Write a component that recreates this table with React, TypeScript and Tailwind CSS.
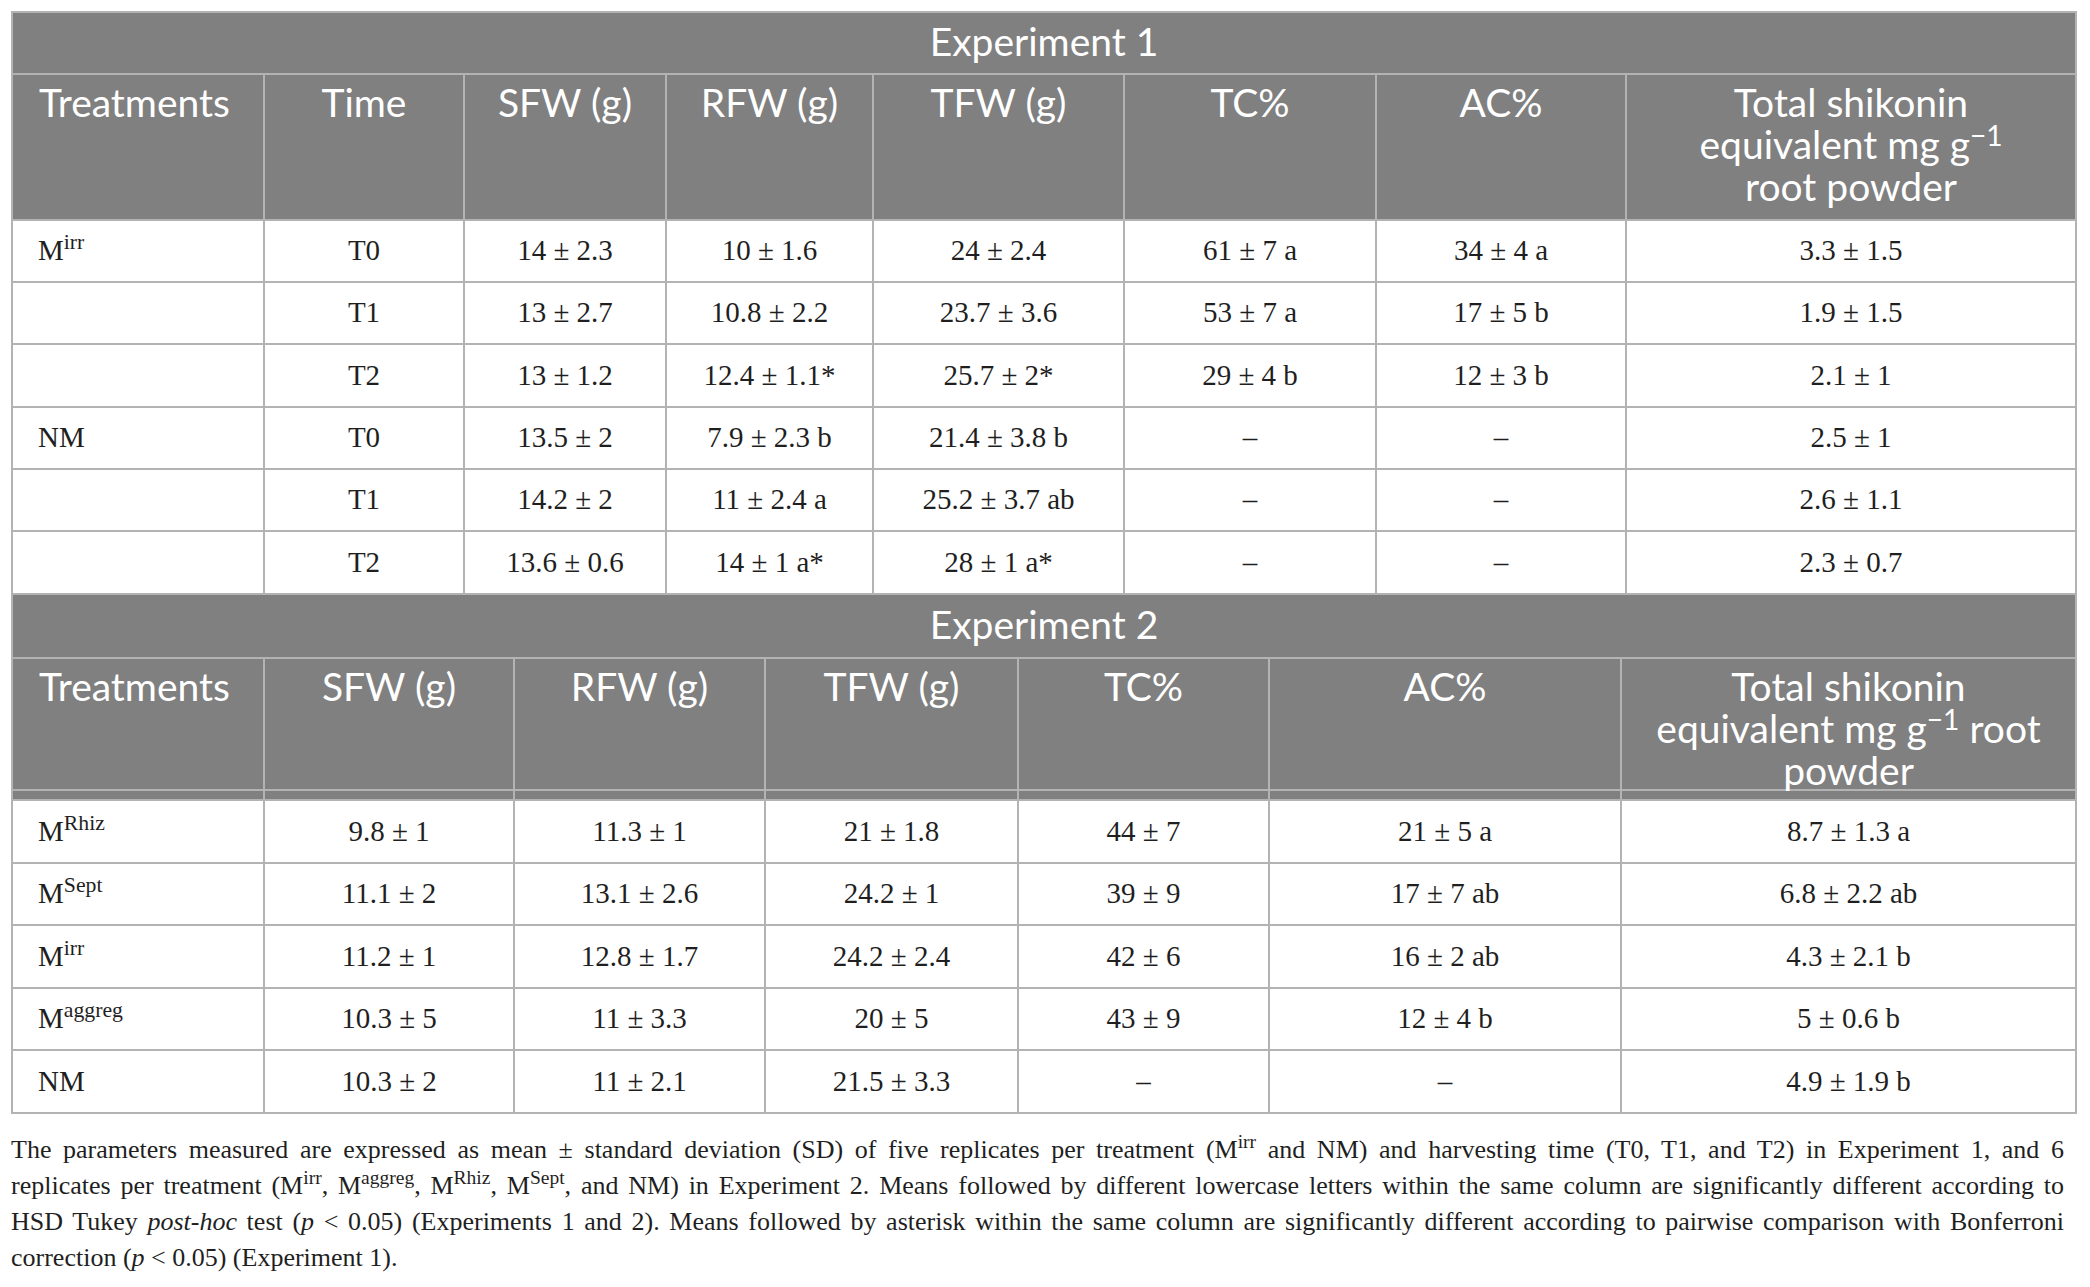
import React from "react";

const B = "border-[#b3b3b3]";
const HEAD = "font-['Lato','Noto_Sans',sans-serif] text-white text-[39px] leading-[42px]";
const BODY = "font-['Liberation_Serif','Times_New_Roman',serif] text-[#1f1f1f] text-[29px]";

type Cell = React.ReactNode;

const exp1Rows: { h: string; cells: Cell[] }[] = [
  { h: "h-[62px]", cells: [<>M<sup>irr</sup></>, "T0", "14 ± 2.3", "10 ± 1.6", "24 ± 2.4", "61 ± 7 a", "34 ± 4 a", "3.3 ± 1.5"] },
  { h: "h-[62px]", cells: ["", "T1", "13 ± 2.7", "10.8 ± 2.2", "23.7 ± 3.6", "53 ± 7 a", "17 ± 5 b", "1.9 ± 1.5"] },
  { h: "h-[63px]", cells: ["", "T2", "13 ± 1.2", "12.4 ± 1.1*", "25.7 ± 2*", "29 ± 4 b", "12 ± 3 b", "2.1 ± 1"] },
  { h: "h-[62px]", cells: ["NM", "T0", "13.5 ± 2", "7.9 ± 2.3 b", "21.4 ± 3.8 b", "–", "–", "2.5 ± 1"] },
  { h: "h-[62px]", cells: ["", "T1", "14.2 ± 2", "11 ± 2.4 a", "25.2 ± 3.7 ab", "–", "–", "2.6 ± 1.1"] },
  { h: "h-[63px]", cells: ["", "T2", "13.6 ± 0.6", "14 ± 1 a*", "28 ± 1 a*", "–", "–", "2.3 ± 0.7"] },
];

const exp2Rows: { h: string; cells: Cell[] }[] = [
  { h: "h-[63px]", cells: [<>M<sup>Rhiz</sup></>, "9.8 ± 1", "11.3 ± 1", "21 ± 1.8", "44 ± 7", "21 ± 5 a", "8.7 ± 1.3 a"] },
  { h: "h-[62px]", cells: [<>M<sup>Sept</sup></>, "11.1 ± 2", "13.1 ± 2.6", "24.2 ± 1", "39 ± 9", "17 ± 7 ab", "6.8 ± 2.2 ab"] },
  { h: "h-[63px]", cells: [<>M<sup>irr</sup></>, "11.2 ± 1", "12.8 ± 1.7", "24.2 ± 2.4", "42 ± 6", "16 ± 2 ab", "4.3 ± 2.1 b"] },
  { h: "h-[62px]", cells: [<>M<sup>aggreg</sup></>, "10.3 ± 5", "11 ± 3.3", "20 ± 5", "43 ± 9", "12 ± 4 b", "5 ± 0.6 b"] },
  { h: "h-[63px]", cells: ["NM", "10.3 ± 2", "11 ± 2.1", "21.5 ± 3.3", "–", "–", "4.9 ± 1.9 b"] },
];

function HeadCell({ children, left, h }: { children: React.ReactNode; left?: boolean; h: string }) {
  return (
    <div
      className={`${h} border-r-2 border-b-2 ${B} bg-[#808080] pt-[6px] ${HEAD} ${
        left ? "pl-[26px] text-left" : "text-center"
      }`}
    >
      {children}
    </div>
  );
}

function DataCell({ children, left, h }: { children: React.ReactNode; left?: boolean; h: string }) {
  return (
    <div
      className={`${h} border-r-2 border-b-2 ${B} bg-white flex items-center ${BODY} ${
        left ? "pl-[25px] justify-start" : "justify-center"
      }`}
    >
      <span className="whitespace-nowrap">{children}</span>
    </div>
  );
}

function Minus1() {
  return <sup className="text-[0.72em] -top-[0.45em]">−1</sup>;
}

export default function App() {
  return (
    <div className="w-[2090px] min-h-[1287px] bg-white pt-[11px] pl-[11px]">
      <div className={`w-[2066px] border-l-2 border-t-2 ${B}`}>
        {/* Experiment 1 */}
        <div className={`h-[62px] border-r-2 border-b-2 ${B} bg-[#808080] pt-[7px] text-center ${HEAD}`}>
          Experiment 1
        </div>
        <div className="grid grid-cols-[252px_200px_202px_207px_251px_252px_250px_450px]">
          <HeadCell left h="h-[146px]">Treatments</HeadCell>
          <HeadCell h="h-[146px]">Time</HeadCell>
          <HeadCell h="h-[146px]">SFW (g)</HeadCell>
          <HeadCell h="h-[146px]">RFW (g)</HeadCell>
          <HeadCell h="h-[146px]">TFW (g)</HeadCell>
          <HeadCell h="h-[146px]">TC%</HeadCell>
          <HeadCell h="h-[146px]">AC%</HeadCell>
          <HeadCell h="h-[146px]">
            Total shikonin
            <br />
            equivalent mg g<Minus1 />
            <br />
            root powder
          </HeadCell>
          {exp1Rows.map((r, i) =>
            r.cells.map((c, j) => (
              <DataCell key={`${i}-${j}`} left={j === 0} h={r.h}>
                {c}
              </DataCell>
            ))
          )}
        </div>

        {/* Experiment 2 */}
        <div className={`h-[64px] border-r-2 border-b-2 ${B} bg-[#808080] pt-[8px] text-center ${HEAD}`}>
          Experiment 2
        </div>
        <div className="grid grid-cols-[252px_250px_251px_253px_251px_352px_455px]">
          <HeadCell left h="h-[132px]">Treatments</HeadCell>
          <HeadCell h="h-[132px]">SFW (g)</HeadCell>
          <HeadCell h="h-[132px]">RFW (g)</HeadCell>
          <HeadCell h="h-[132px]">TFW (g)</HeadCell>
          <HeadCell h="h-[132px]">TC%</HeadCell>
          <HeadCell h="h-[132px]">AC%</HeadCell>
          <HeadCell h="h-[132px]">
            Total shikonin
            <br />
            equivalent mg g<Minus1 /> root
            <br />
            powder
          </HeadCell>
          {Array.from({ length: 7 }).map((_, j) => (
            <div key={`band-${j}`} className={`h-[10px] border-r-2 border-b-2 ${B} bg-[#808080]`} />
          ))}
          {exp2Rows.map((r, i) =>
            r.cells.map((c, j) => (
              <DataCell key={`b${i}-${j}`} left={j === 0} h={r.h}>
                {c}
              </DataCell>
            ))
          )}
        </div>
      </div>

      {/* Footnote */}
      <div className="mt-[18px] w-[2053px] font-['Liberation_Serif','Times_New_Roman',serif] text-[26px] leading-[36px] text-[#1f1f1f]">
        <div className="whitespace-nowrap text-justify [text-align-last:justify]">
          The parameters measured are expressed as mean ± standard deviation (SD) of five replicates per treatment (M
          <sup>irr</sup> and NM) and harvesting time (T0, T1, and T2) in Experiment 1, and 6
        </div>
        <div className="whitespace-nowrap text-justify [text-align-last:justify]">
          replicates per treatment (M<sup>irr</sup>, M<sup>aggreg</sup>, M<sup>Rhiz</sup>, M<sup>Sept</sup>, and NM) in
          Experiment 2. Means followed by different lowercase letters within the same column are significantly different
          according to
        </div>
        <div className="whitespace-nowrap text-justify [text-align-last:justify]">
          HSD Tukey <i>post-hoc</i> test (<i>p</i> &lt; 0.05) (Experiments 1 and 2). Means followed by asterisk within the
          same column are significantly different according to pairwise comparison with Bonferroni
        </div>
        <div className="whitespace-nowrap">
          correction (<i>p</i> &lt; 0.05) (Experiment 1).
        </div>
      </div>
    </div>
  );
}
